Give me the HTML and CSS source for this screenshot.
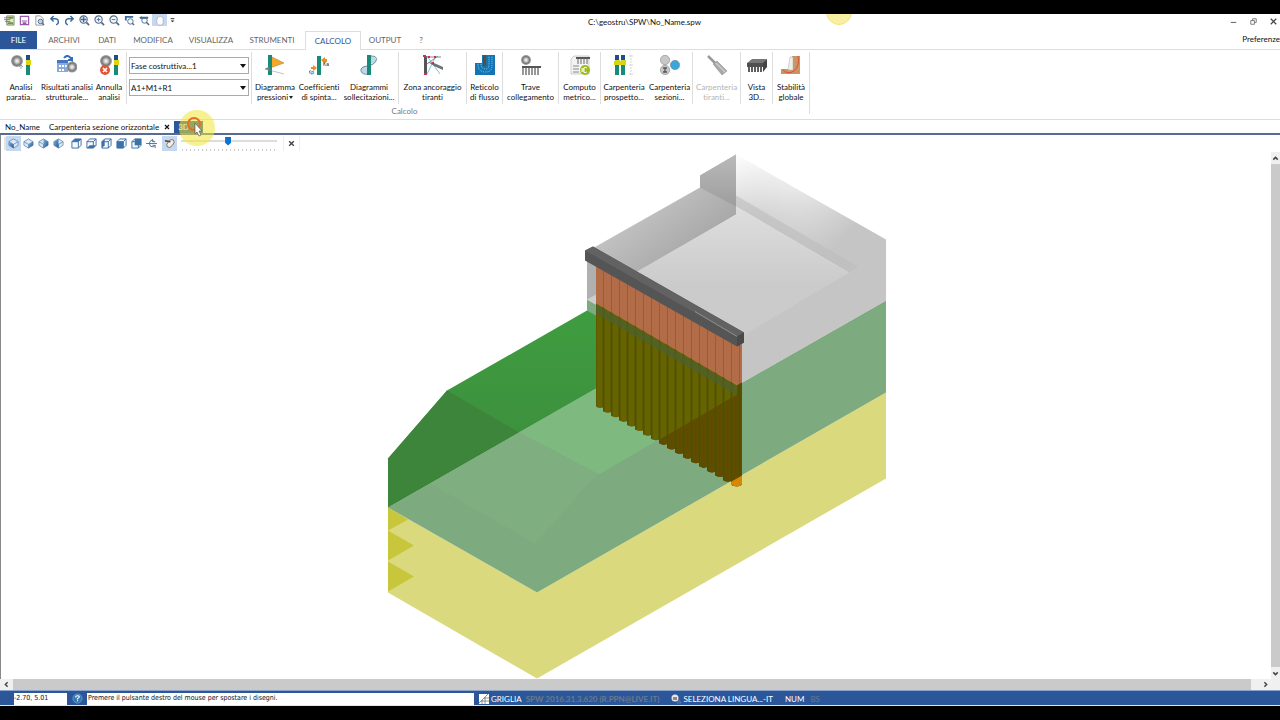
FILE: index.html
```html
<!DOCTYPE html>
<html lang="it">
<head>
<meta charset="utf-8">
<title>C:\geostru\SPW\No_Name.spw</title>
<link rel="stylesheet" href="styles.css">
</head>
<body>
<svg class="defs" width="0" height="0" aria-hidden="true">
  <defs>
    <radialGradient id="ball"><stop offset="0" stop-color="#fff"/><stop offset=".35" stop-color="#c4c4c4"/><stop offset=".7" stop-color="#777"/><stop offset="1" stop-color="#aaa"/></radialGradient>
    <linearGradient id="cubeFill" x1="0" y1="0" x2="1" y2="1"><stop offset="0" stop-color="#7eb0dc"/><stop offset="1" stop-color="#27588c"/></linearGradient>
    <symbol id="wall" viewBox="0 0 5 20"><path d="M0 0h4v20H0z" fill="#188a78"/><path d="M0 0h4v5H0z" fill="#1c4f8c"/><path d="M0 5h5v5H0z" fill="#d9d60d"/></symbol>
    <symbol id="lens" viewBox="0 0 12 12"><circle cx="5" cy="5" r="4" fill="#f4f8fc" stroke="#536a84" stroke-width="1.2"/><path d="M8 8l3 3" stroke="#536a84" stroke-width="1.8"/></symbol>
    <symbol id="cube" viewBox="0 0 12 12"><path d="M1 4l3-3h7v7l-3 3H1z" fill="#f3f8fd" stroke="#3b6a9c"/><path d="M1 4h7v7M8 4l3-3" fill="none" stroke="#3b6a9c"/></symbol>
    <symbol id="iso" viewBox="0 0 12 12"><path d="M6 1l5 3v4L6 11 1 8V4z" fill="#dceaf7" stroke="#5580ad" stroke-width=".8"/><path d="M1 4l5 3 5-3M6 7v4" fill="none" stroke="#5580ad" stroke-width=".8"/></symbol>
  </defs>
</svg>

<div class="letterbox"></div>

<header class="titlebar">
  <nav class="quick" aria-label="Accesso rapido">
    <button aria-label="Apri"><svg viewBox="0 0 12 12"><path d="M3 1h8v10H3z" fill="#f2e7b4" stroke="#5c6f63" stroke-width=".8"/><path d="M5 2h5v2H5zM4 8h6v2H4z" fill="#5d9a58"/><path d="M0 3h6M0 5h7M1 7h6" stroke="#666" stroke-width=".8"/></svg></button>
    <button aria-label="Salva"><svg viewBox="0 0 12 12"><path d="M1.500 1.500h9v9h-9z" fill="#fff" stroke="#9659a7" stroke-width="1.300"/><path d="M3 6h6v1H3zM4 8h4v3H4z" fill="#9659a7"/></svg></button>
    <button aria-label="Anteprima"><svg viewBox="0 0 12 12"><path d="M2 1h5l3 3v7H2z" fill="#fff" stroke="#777" stroke-width=".8"/><circle cx="7" cy="7" r="2.500" fill="#b8d6f0" stroke="#536a84"/><path d="M9 9l2 2" stroke="#536a84" stroke-width="1.500"/></svg></button>
    <button aria-label="Annulla"><svg viewBox="0 0 12 12"><path d="M5 1L2 4l3 3M2 4h5q4 0 3 5l-2 2" fill="none" stroke="#3b6a9c" stroke-width="1.600"/></svg></button>
    <button aria-label="Ripeti"><svg viewBox="0 0 12 12"><path d="M7 1l3 3-3 3M10 4H5Q1 4 2 9l2 2" fill="none" stroke="#3b6a9c" stroke-width="1.600"/></svg></button>
    <button aria-label="Zoom tutto"><svg viewBox="0 0 12 12"><use href="#lens"/><path d="M5 2v6M2 5h6" stroke="#3b6a9c" stroke-width="1.600"/></svg></button>
    <button aria-label="Zoom avanti"><svg viewBox="0 0 12 12"><use href="#lens"/><path d="M5 3v4M3 5h4" stroke="#3b6a9c"/></svg></button>
    <button aria-label="Zoom indietro"><svg viewBox="0 0 12 12"><use href="#lens"/><path d="M3 5h4" stroke="#3b6a9c"/></svg></button>
    <button aria-label="Zoom finestra"><svg viewBox="0 0 12 12"><path d="M1 6V1h9v2H3v3z" fill="#3b6a9c"/><circle cx="7" cy="7" r="3" fill="#f4f8fc" stroke="#536a84"/><path d="M9 9l2 2" stroke="#536a84" stroke-width="1.600"/></svg></button>
    <button aria-label="Zoom precedente"><svg viewBox="0 0 12 12"><circle cx="6" cy="6" r="3" fill="#f4f8fc" stroke="#536a84"/><path d="M8 8l3 3" stroke="#536a84" stroke-width="1.600"/><path d="M0 3l3-2v1h7v2H3v1z" fill="#3b6a9c"/></svg></button>
    <button class="on" aria-label="Sposta"><svg viewBox="0 0 12 12"><path d="M3 7V4q1-1 1 0V2q1-1 2 0 1-1 2 0 2 0 2 2v4q0 3-2 3H5Q3 10 3 7z" fill="#fff" stroke="#a6aab8" stroke-width=".8"/></svg></button>
    <button class="more" aria-label="Altro"><svg viewBox="0 0 12 12"><path d="M4 4h4" stroke="#222"/><path d="M4 6h4L6 8z" fill="#222"/></svg></button>
  </nav>
  <h1 class="path">C:\geostru\SPW\No_Name.spw</h1>
  <div class="winctl">
    <button aria-label="Riduci"><svg viewBox="0 0 12 12"><path d="M3 7h6" stroke="#555"/></svg></button>
    <button aria-label="Ripristina"><svg viewBox="0 0 12 12"><path d="M3 5h4v4H3zM5 5V3h4v4H7" fill="none" stroke="#555" stroke-width=".8"/></svg></button>
    <button aria-label="Chiudi"><svg viewBox="0 0 12 12"><path d="M3 3l6 6M9 3L3 9" stroke="#444" stroke-width="1.300"/></svg></button>
  </div>
  <div class="halo-clip"><i class="halo"></i></div>
</header>

<nav class="tabs">
  <button class="file">FILE</button>
  <button class="w-54">ARCHIVI</button>
  <button class="w-32">DATI</button>
  <button class="w-60">MODIFICA</button>
  <button class="w-56">VISUALIZZA</button>
  <button class="w-66">STRUMENTI</button>
  <button class="w-56 active">CALCOLO</button>
  <button class="w-48">OUTPUT</button>
  <button class="w-24">?</button>
  <a class="prefs" href="#">Preferenze</a>
</nav>

<section class="ribbon">
  <div class="panel">
    <div class="tools">
      <div class="group">
        <button class="tool w-42"><svg viewBox="0 0 20 20"><circle cx="6" cy="6" r="6" fill="url(#ball)"/><path d="M10 14v-4m-2 2l2-2 2 2" stroke="#8b9099" fill="none" stroke-width=".8"/><use href="#wall" x="15" width="5" height="20"/></svg><span>Analisi<br>paratia...</span></button>
        <button class="tool w-50"><svg viewBox="0 0 20 20"><path d="M0 5h11v12H0z" fill="#87a9df"/><path d="M0 5h11v3H0z" fill="#4875c1"/><path d="M2 10h2v2H2zM5 10h2v2H5zM8 10h2v2H8zM2 14h2v2H2zM5 14h2v2H5z" fill="#fff"/><path d="M7 3q4-5 8 2V2M15 5h-4" stroke="#356cbe" stroke-width="2" fill="none"/><circle cx="15" cy="12" r="5.500" fill="url(#ball)"/></svg><span>Risultati analisi<br>strutturale...</span></button>
        <button class="tool w-34"><svg viewBox="0 0 20 20"><circle cx="7" cy="6" r="6" fill="url(#ball)"/><circle cx="6" cy="15" r="5" fill="#e45332"/><path d="M4 13l4 4M8 13l-4 4" stroke="#fff" stroke-width="1.700"/><use href="#wall" x="15" width="5" height="20"/></svg><span>Annulla<br>analisi</span></button>
      </div>
      <div class="group combos">
        <div class="combo"><select aria-label="Fase costruttiva"><option>Fase costruttiva...1</option></select><svg viewBox="0 0 6 4"><path d="M0 0h6L3 4z" fill="#111"/></svg></div>
        <div class="combo"><select aria-label="Combinazione"><option>A1+M1+R1</option></select><svg viewBox="0 0 6 4"><path d="M0 0h6L3 4z" fill="#111"/></svg></div>
      </div>
      <div class="group">
        <button class="tool w-46"><svg viewBox="0 0 20 20"><path d="M5 1l14 7-14 5z" fill="#f4a825" stroke="#9d7942" stroke-width=".5"/><path d="M3 0h4v20H3z" fill="#188a78"/><path d="M0 14l19 5M0 14l4-2v3z" stroke="#888" stroke-width=".5" fill="#777"/></svg><span>Diagramma<br>pressioni<b class="caret"></b></span></button>
        <button class="tool w-42"><svg viewBox="0 0 20 20"><path d="M8 1h4v19H8z" fill="#188a78"/><path d="M12 5l4-3v2h2v3h-2v2zM8 13l-4-3v2H2v2h2v2z" fill="#ed8b25"/><text x="14" y="11" class="tiny">Ka</text><text x="-1" y="19" class="tiny">Kp</text></svg><span>Coefficienti<br>di spinta...</span></button>
        <button class="tool w-58"><svg viewBox="0 0 20 20"><path d="M12 1q7 2 4 6-2 4-8 4-7 1-6 5t8 3z" fill="#d3e9f3"/><path d="M8 0h4v20H8z" fill="#188a78"/><path d="M12 1q7 0 5 5-2 4-9 5-7 1-6 5t8 3" fill="none" stroke="#487181" stroke-width=".8"/><path d="M12 3h4M12 5h5M12 7h4M3 13h5M2 15h6M3 17h5" stroke="#72abc2" stroke-width=".5"/></svg><span>Diagrammi<br>sollecitazioni...</span></button>
      </div>
      <div class="group">
        <button class="tool w-67"><svg viewBox="0 0 20 20"><path d="M1 1h3v18H1z" fill="#555"/><path d="M3 2h15M4 9L15 1" stroke="#8d888d"/><path d="M4 19l9-18M4 1l13 18" stroke="#53a6bf" stroke-width=".7"/><path d="M5 7l6 1 9 4v3l-9-4z" fill="#6d7275"/><path d="M0 0h3v2H0zM5 1h2v2H5zM11 1h2v2h-2zM1 18h3v2H1zM9 7h2v2H9z" fill="#c43455"/></svg><span>Zona ancoraggio<br>tiranti</span></button>
      </div>
      <div class="group">
        <button class="tool w-35"><svg viewBox="0 0 20 20"><path d="M0 8h7V0h13v20H0z" fill="#1474b4"/><path d="M8 0h3v11H8z" fill="#624d34"/><path d="M3 9q0 8 8 8 6 0 6-8V1M6 9q0 5 5 5 3 0 3-5V1" fill="none" stroke="#7fd4e8" stroke-dasharray="1 1"/></svg><span>Reticolo<br>di flusso</span></button>
      </div>
      <div class="group">
        <button class="tool w-55"><svg viewBox="0 0 20 20"><circle cx="5" cy="5" r="5" fill="url(#ball)"/><path d="M1 11h19v2H1z" fill="#555"/><path d="M2 13v7M5 13v7M8 13v7M11 13v7M14 13v7M17 13v7" stroke="#777" stroke-width="1.500"/></svg><span>Trave<br>collegamento</span></button>
      </div>
      <div class="group">
        <button class="tool w-41"><svg viewBox="0 0 20 20"><path d="M1 4l3-3h15v18H1z" fill="#f3f3f3" stroke="#bbb" stroke-width=".7"/><path d="M6 2h14v2H6z" fill="#555"/><path d="M8 3v6M11 3v6M14 3v6M17 3v6" stroke="#666"/><path d="M3 11h6M3 14h6M3 17h6" stroke="#888"/><circle cx="15" cy="15" r="5" fill="#9dbb18"/><path d="M17 13q-4-2-4 2t4 2M11 14h4M11 16h4" fill="none" stroke="#fff"/></svg><span>Computo<br>metrico...</span></button>
      </div>
      <div class="group">
        <button class="tool w-46"><svg viewBox="0 0 20 20"><use href="#wall" x="1" width="5" height="20"/><use href="#wall" x="7" width="5" height="20"/><path d="M0 6h12v4H0z" fill="#d9d60d"/><path d="M17 0v20M15 1h4M15 10h4M15 19h4" stroke="#bbb" stroke-width=".6" stroke-dasharray="2 1"/></svg><span>Carpenteria<br>prospetto...</span></button>
        <button class="tool w-45"><svg viewBox="0 0 20 20"><circle cx="5" cy="5" r="4.700" fill="#c7c7c7" stroke="#888" stroke-width=".6"/><circle cx="5" cy="15" r="4.700" fill="#c7c7c7" stroke="#888" stroke-width=".6"/><circle cx="15" cy="10" r="4.700" fill="#39a7dc" stroke="#888" stroke-width=".6"/><path d="M3 13h4M3 17h4M5 13v4" stroke="#555" stroke-width="1.300"/></svg><span>Carpenteria<br>sezioni...</span></button>
      </div>
      <div class="group">
        <button class="tool w-47" disabled><svg viewBox="0 0 20 20"><path d="M1 1l7 7" stroke="#999" stroke-width="2.500"/><path d="M6 9l4-3 10 10-5 4z" fill="#a8a8a8" stroke="#888" stroke-width=".5"/><path d="M9 8l9 9" stroke="#ccc" stroke-width="1.500"/></svg><span>Carpenteria<br>tiranti...</span></button>
      </div>
      <div class="group">
        <button class="tool w-31"><svg viewBox="0 0 20 20"><path d="M0 8l5-4h15l-4 5H0z" fill="#777"/><path d="M0 8h16v4H0z" fill="#505050"/><path d="M16 8l4-4v8l-4 5z" fill="#444"/><path d="M2 12v5M5 12v5M8 12v5M11 12v5M14 12v5" stroke="#5e5e5e" stroke-width="2"/></svg><span>Vista<br>3D...</span></button>
      </div>
      <div class="group last">
        <button class="tool w-36"><svg viewBox="0 0 20 20"><path d="M0 14h9L11 1h8v18H0z" fill="#c99662"/><path d="M9 2h3v13H7z" fill="#eee" stroke="#aaa" stroke-width=".5"/><path d="M2 15q5 5 11 1 6-5 4-15" fill="none" stroke="#e24c38"/></svg><span>Stabilità<br>globale</span></button>
      </div>
    </div>
    <div class="caption">Calcolo</div>
  </div>
</section>

<nav class="docs">
  <button class="doc">No_Name</button>
  <button class="doc">Carpenteria sezione orizzontale</button>
  <button class="close" aria-label="Chiudi scheda"><svg viewBox="0 0 6 6"><path d="M1 1l4 4M5 1L1 5" stroke="#111" stroke-width="1.200"/></svg></button>
  <span class="current"><button class="doc3d">3D</button>
    <svg class="pointer" viewBox="0 0 38 38"><circle cx="19" cy="19" r="18" fill="#f2e634" fill-opacity=".55"/><circle cx="16" cy="15" r="6" fill="none" stroke="#e86d24" stroke-width="2"/><path d="M17 14v11l2-2 2 4 2-1-2-4h3z" fill="#fff" stroke="#444" stroke-width=".6"/></svg>
  </span>
</nav>

<main class="work">
  <div class="viewtools">
    <i class="grip"></i>
    <button class="on" aria-label="Vista isometrica 1"><svg viewBox="0 0 12 12"><use href="#iso"/><path d="M1 4l5 3v4L1 8z" fill="url(#cubeFill)"/></svg></button>
    <button aria-label="Vista isometrica 2"><svg viewBox="0 0 12 12"><use href="#iso"/><path d="M6 7l5-3v4l-5 3z" fill="url(#cubeFill)"/></svg></button>
    <button aria-label="Vista isometrica 3"><svg viewBox="0 0 12 12"><use href="#iso"/><path d="M6 1l5 3v4L6 11z" fill="url(#cubeFill)"/></svg></button>
    <button aria-label="Vista isometrica 4"><svg viewBox="0 0 12 12"><use href="#iso"/><path d="M6 1v10L1 8V4z" fill="url(#cubeFill)"/></svg></button>
    <i class="space"></i>
    <button aria-label="Alto"><svg viewBox="0 0 12 12"><use href="#cube"/><path d="M1 4l3-3h7L8 4z" fill="#3973a9"/></svg></button>
    <button aria-label="Basso"><svg viewBox="0 0 12 12"><use href="#cube"/><path d="M1 11l3-3h7l-3 3z" fill="#3973a9"/></svg></button>
    <button aria-label="Sinistra"><svg viewBox="0 0 12 12"><use href="#cube"/><path d="M1 4l3-3v7l-3 3z" fill="#3973a9"/></svg></button>
    <button aria-label="Fronte"><svg viewBox="0 0 12 12"><use href="#cube"/><path d="M1 4h7v7H1z" fill="#3973a9"/></svg></button>
    <button aria-label="Retro"><svg viewBox="0 0 12 12"><use href="#cube"/><path d="M4 1h7v7H4z" fill="#3973a9"/></svg></button>
    <button aria-label="Ruota"><svg viewBox="0 0 12 12"><path d="M0 6h12M9 4Q7 1 5 3 2 6 5 9q3 2 5-1M7 1v3h3M10 11V8H7" stroke="#47739c" fill="none"/></svg></button>
    <i class="space"></i>
    <button class="on" aria-label="Trasparenza"><svg viewBox="0 0 12 12"><ellipse cx="7" cy="6" rx="5" ry="3" transform="rotate(-50 7 6)" fill="#f5eee4" stroke="#777"/><path d="M1 3l6 1" stroke="#5c412c" stroke-width="1.600"/></svg></button>
    <div class="slide"><input type="range" min="0" max="100" value="49" aria-label="Opacità"><div class="ticks"></div></div>
    <button class="x" aria-label="Chiudi barra"><svg viewBox="0 0 6 6"><path d="M1 1l4 4M5 1L1 5" stroke="#444" stroke-width="1.200"/></svg></button>
  </div>
  <div class="stage">
    <svg class="scene" viewBox="1 152 1270 526" role="img" aria-label="Modello 3D della paratia">
      <defs>
        <linearGradient id="outer" gradientUnits="userSpaceOnUse" x1="811" y1="197" x2="786" y2="241"><stop offset="0" stop-color="#f6f6f6"/><stop offset="1" stop-color="#c6c6c6"/></linearGradient>
        <linearGradient id="shine" gradientUnits="userSpaceOnUse" x1="742" y1="152" x2="850" y2="252"><stop offset="0" stop-color="#fff" stop-opacity=".7"/><stop offset=".4" stop-color="#d8d8d8" stop-opacity=".4"/><stop offset=".9" stop-color="#c5c5c5"/></linearGradient>
        <linearGradient id="side" gradientUnits="userSpaceOnUse" x1="650" y1="200" x2="690" y2="250"><stop offset="0" stop-color="#c2c2c2"/><stop offset="1" stop-color="#a9a9a9"/></linearGradient>
        <linearGradient id="corner" x1="0" y1="0" x2="0" y2="1"><stop offset="0" stop-color="#bababa"/><stop offset="1" stop-color="#9d9d9d"/></linearGradient>
        <linearGradient id="floor" x1="0" y1="0" x2="0" y2="1"><stop offset="0" stop-color="#dedede"/><stop offset=".6" stop-color="#cbcbcb"/><stop offset="1" stop-color="#cbcbcb"/></linearGradient>
        <linearGradient id="bank" x1="0" y1="0" x2="0" y2="1"><stop offset="0" stop-color="#3f9c40"/><stop offset="1" stop-color="#3c8b3c"/></linearGradient>
        <pattern id="lines" patternUnits="userSpaceOnUse" x="595" y="0" width="8" height="10"><path d="M0 0h1v10H0z" fill="#cb4a0c"/></pattern>
        <pattern id="shade" patternUnits="userSpaceOnUse" x="595" y="0" width="8" height="10"><path d="M0 0h1v10H0z" fill="#464b00"/><path d="M1 0h1v10H1zM7 0h1v10H7z" fill="#565400"/></pattern>
        <clipPath id="pileArea"><path d="M596 260L742 344V484q-5 4-11 0v-3.600q-4 2-8-1v-3.600q-4 2-8-1v-3.600q-4 2-8-1v-3.600q-4 2-8-1v-3.600q-4 2-8-1v-3.600q-4 2-8-1v-3.600q-4 2-8-1v-3.600q-4 2-8-1v-3.600q-4 2-8-1v-3.600q-4 2-8-1v-3.600q-4 2-8-1v-3.600q-4 2-8-1v-3.600q-4 2-8-1v-3.600q-4 2-8-1v-3.600q-4 2-8-1v-3.600q-4 2-8-1v-3.600q-4 2-7-1V260z"/></clipPath>
      </defs>
      <path d="M388 507L537 592 886 392V478L537 678 388 592z" fill="#dad97e"/>
      <path d="M388 507l20 12-20 11zM388 530l26 15-26 15zM388 561l26 15-26 15z" fill="#c8c63b"/>
      <path d="M388 458l59-68 140-80h13v76L388 507z" fill="url(#bank)"/>
      <path d="M388 458l59-68 72 42L388 507z" fill="#3c853b"/>
      <path d="M388 507L596 388l141-3 149-85v92L537 592z" fill="#7daa7e"/>
      <path d="M519 432l77-44 140 6-137 80z" fill="#7eb980"/>
      <path d="M519 432l80 42q-16 12-30 32l-34 37-105-60z" fill="#7fae80"/>
      <path d="M587 299l150 86v10L587 310z" fill="#7daa7e"/>
      <path d="M587 260l150 80v45l-141-81-9-5z" fill="#b0b0b0"/>
      <path d="M587 299l9-5v10z" fill="#cdcdcd"/>
      <path d="M594 247l106-60V175l36-21V214l-95 57v6l-47-24z" fill="url(#side)"/>
      <path d="M700 175l36-21v52l-36-19z" fill="url(#corner)"/>
      <path d="M736 154l150 85v61L737 385V334L849 272 736 206z" fill="url(#outer)"/>
      <path d="M736 154l150 85v61L737 385V334L849 272 736 206z" fill="url(#shine)"/>
      <path d="M736 195l122 71-9 6-113-66z" fill="#bdbdbd" fill-opacity=".6"/>
      <path d="M736 206l113 66-106 63-106-62v-2l99-57z" fill="url(#floor)"/>
      <g clip-path="url(#pileArea)">
        <path d="M596 250h146v240H596z" fill="#b26d48"/>
        <path d="M596 250h146v240H596z" fill="url(#lines)"/>
        <path d="M596 303l141 82 5-3v108H596z" fill="#666400"/>
        <path d="M737 394l-86 50v60h91V382l-5 3z" fill="#604c00"/>
        <path d="M596 303l141 82 5-3v108H596z" fill="url(#shade)" fill-opacity=".65"/>
        <path d="M596 304l141 82v9l-141-82z" fill="#4d602c" fill-opacity=".75"/>
        <path d="M728 483l14-8v12h-14z" fill="#d98700"/>
      </g>
      <path d="M585 250l8-4 151 86v10l-7 4L585 260z" fill="#555"/>
      <path d="M585 250l8-4 151 86-7 4z" fill="#626262"/>
      <path d="M737 336l7-4v10l-7 4z" fill="#4a4a4a"/>
      <path d="M695 311l42 25" stroke="#999" stroke-width=".8"/>
    </svg>
    <div class="vscroll"><button aria-label="Su"><svg viewBox="0 0 8 8"><path d="M2 5l2-2 2 2" fill="none" stroke="#444" stroke-width="1.300"/></svg></button><i class="thumb"></i><button aria-label="Giù"><svg viewBox="0 0 8 8"><path d="M2 3l2 2 2-2" fill="none" stroke="#444" stroke-width="1.300"/></svg></button></div>
  </div>
</main>
<div class="hscroll"><button aria-label="Sinistra"><svg viewBox="0 0 8 8"><path d="M5 2L3 4l2 2" fill="none" stroke="#444" stroke-width="1.300"/></svg></button><i class="thumb"></i><button class="right" aria-label="Destra"><svg viewBox="0 0 8 8"><path d="M3 2l2 2-2 2" fill="none" stroke="#444" stroke-width="1.300"/></svg></button></div>

<footer class="status">
  <output class="coords">-2.70, 5.01</output>
  <button class="help" aria-label="Aiuto"><svg viewBox="0 0 12 12"><circle cx="6" cy="6" r="5" fill="#3479b3" stroke="#6fa3cf" stroke-width=".8"/><path d="M4 5q0-2 2-2t2 1q0 1-2 2v1M6 8v1" fill="none" stroke="#fff" stroke-width="1.200"/></svg></button>
  <span class="hint">Premere il pulsante destro del mouse per spostare i disegni.</span>
  <button class="item"><svg viewBox="0 0 10 10"><path d="M0 0h10v10H0z" fill="#fff"/><path d="M0 9L9 0M3 6v4M6 3v7M2 7h8M5 4h5" stroke="#777" stroke-width=".8"/></svg>GRIGLIA</button>
  <span class="version">SPW 2016.31.3.620 (R.PPN@LIVE.IT)</span>
  <button class="item lang"><svg viewBox="0 0 10 10"><circle cx="4" cy="4" r="3.500" fill="#e5e5e5"/><path d="M2 3h4v3H2z" fill="#a37f7a"/><path d="M6 9l2-3 2 3z" fill="none" stroke="#7793bf" stroke-width=".6"/></svg>SELEZIONA LINGUA...-IT</button>
  <span class="num">NUM</span>
  <span class="bs">BS</span>
</footer>
<div class="letterbox"></div>
</body>
</html>
```
FILE: styles.css
```css
* { box-sizing: border-box; }
body {
  margin: 0;
  min-height: 100vh;
  display: flex;
  flex-direction: column;
  background: #fff;
  color: #111;
  font: 8px/10px Lato, "Open Sans", sans-serif;
  font-variant-ligatures: none;
}
button, select {
  margin: 0;
  padding: 0;
  border: 0;
  background: none;
  color: inherit;
  font: inherit;
  font-variant-ligatures: none;
}
svg { display: block; flex: none; }
.defs { position: absolute; }
.letterbox { height: 14px; background: #000; flex: none; }

.titlebar {
  position: relative;
  display: flex;
  align-items: flex-start;
  height: 17px;
}
.quick { display: flex; padding-left: 2px; flex: 1; }
.quick button { width: 15px; height: 12px; display: grid; place-items: center; }
.quick svg, .winctl svg { width: 11px; height: 11px; }
.quick .more { width: 11px; }
.on { background: #c6d7f0; }
.path { margin: 0 0 0 8px; padding-top: 3px; font-size: 8px; font-weight: 400; line-height: 10px; }
.winctl { display: flex; flex: 1; justify-content: flex-end; padding: 2px 1px 0 0; gap: 8px; }
.winctl button { width: 12px; display: grid; place-items: center; }
.halo-clip { position: absolute; inset: 0; overflow: hidden; pointer-events: none; }
.halo {
  position: absolute;
  left: 826px;
  top: -15px;
  width: 26px;
  height: 26px;
  border-radius: 50%;
  background: #f8efa0;
  border: 1px solid #f3e57a;
}

.tabs { display: flex; height: 19px; border-bottom: 1px solid #ddd; color: #666; }
.tabs .file { width: 37px; background: #2b579a; color: #fff; }
.tabs .active { height: 19px; padding-bottom: 1px; border: 1px solid #ddd; border-bottom: 0; background: #fff; color: #2b579a; }
.prefs { margin-left: auto; padding-top: 3px; color: #111; text-decoration: none; }
.w-24 { width: 24px; } .w-31 { width: 31px; } .w-32 { width: 32px; }
.w-34 { width: 34px; } .w-35 { width: 35px; } .w-36 { width: 36px; }
.w-41 { width: 41px; } .w-42 { width: 42px; } .w-45 { width: 45px; }
.w-46 { width: 46px; } .w-47 { width: 47px; } .w-48 { width: 48px; }
.w-50 { width: 50px; } .w-54 { width: 54px; } .w-55 { width: 55px; }
.w-56 { width: 56px; } .w-58 { width: 58px; } .w-60 { width: 60px; }
.w-66 { width: 66px; } .w-67 { width: 67px; }

.ribbon { display: flex; height: 70px; padding-top: 2px; border-bottom: 1px solid #ddd; }
.panel { border-right: 1px solid #ddd; height: 62px; }
.tools { display: flex; height: 52px; }
.group { display: flex; border-right: 1px solid #ddd; }
.group.last { border-right: 0; }
.tool {
  display: flex;
  flex-direction: column;
  align-items: center;
  gap: 7px;
  padding-top: 3px;
  white-space: nowrap;
}
.tool svg { width: 20px; height: 20px; }
.tool:disabled { color: #b4b4b4; }
.tiny { font: 5px/5px "Liberation Sans", sans-serif; fill: #222; }
.caret {
  display: inline-block;
  margin-left: 1px;
  vertical-align: middle;
  border: 2px solid transparent;
  border-top: 3px solid #222;
  border-bottom: 0;
}
.combos { flex-direction: column; gap: 5px; padding: 5px 2px 0; width: 125px; }
.combo { display: flex; align-items: center; height: 17px; border: 1px solid #aaa; padding-right: 2px; }
.combo select { flex: 1; height: 15px; padding-left: 1px; appearance: none; outline: 0; }
.combo svg { width: 6px; height: 4px; }
.caption { padding-top: 2px; text-align: center; color: #777; }

.docs { display: flex; align-items: stretch; height: 15px; padding: 1px 0 0 5px; border-bottom: 2px solid #5a6a90; }
.doc { margin-right: 7px; }
.doc:first-child { margin-right: 9px; }
.docs .close { width: 6px; margin: 0 4px 0 -2px; display: grid; place-items: center; }
.close svg { width: 6px; height: 6px; }
.current { position: relative; display: flex; width: 29px; background: #2b579a; color: #fff; }
.doc3d { padding-left: 4px; }
.pointer { position: absolute; left: 4px; top: -12px; width: 38px; height: 38px; z-index: 2; pointer-events: none; }

.work { flex: 1; display: flex; flex-direction: column; border-left: 1px solid #888; }
.viewtools { display: flex; align-items: center; height: 17px; padding-left: 3px; }
.viewtools button { width: 15px; height: 15px; display: grid; place-items: center; }
.viewtools button svg { width: 11px; height: 11px; }
.grip { width: 2px; height: 13px; background: #e4e4e4; }
.viewtools .space { width: 3px; }
.slide { width: 98px; margin-left: 3px; }
.slide input { display: block; width: 98px; height: 9px; margin: 0; appearance: none; background: linear-gradient(#ddd, #ddd) center / 96px 2px no-repeat; }
.slide input::-webkit-slider-thumb { appearance: none; width: 6px; height: 9px; background: #0b73d0; clip-path: polygon(0 0, 100% 0, 100% 70%, 50% 100%, 0 70%); }
.ticks { height: 2px; margin: 3px 2px 0; background: repeating-linear-gradient(90deg, #ccc 0 1px, transparent 1px 4px); }
.viewtools .x { width: 17px; margin-left: 5px; border-left: 1px solid #eee; border-right: 1px solid #eee; }
.viewtools .x svg { width: 7px; height: 7px; }
.stage { flex: 1; display: flex; min-height: 0; }
.scene { flex: 1; min-width: 0; height: auto; }
.vscroll { display: flex; flex-direction: column; width: 9px; background: #f0f0f0; }
.vscroll button { height: 12px; display: grid; place-items: center; }
.vscroll .thumb { flex: 1; background: #cacaca; }
.vscroll svg, .hscroll svg { width: 9px; height: 9px; }
.hscroll { display: flex; height: 11px; background: #f0f0f0; }
.hscroll button { width: 13px; display: grid; place-items: center; }
.hscroll .thumb { flex: 1; background: #cacaca; }
.hscroll .right { width: 29px; }

.status { display: flex; height: 16px; padding-top: 1px; border-bottom: 1px solid #dfe6f1; border-top: 1px solid #8ba3c8; background: #2b579a; color: #fff; align-items: center; }
.coords, .hint { align-self: stretch; margin-top: 1px; background: #fff; color: #111; font: 7px/10px "DejaVu Sans Condensed", "DejaVu Sans", sans-serif; }
.coords { width: 53px; margin-left: 14px; }
.help { width: 20px; display: grid; place-items: center; }
.help svg { width: 11px; height: 11px; }
.hint { width: 387px; padding-left: 1px; }
.item { display: flex; align-items: center; gap: 2px; margin-left: 5px; white-space: nowrap; }
.item svg { width: 10px; height: 10px; }
.version { margin-left: 4px; color: #6d7888; font-weight: 700; }
.lang { margin-left: 12px; }
.num { margin-left: 12px; }
.bs { margin-left: 6px; color: #6d7888; }
```
